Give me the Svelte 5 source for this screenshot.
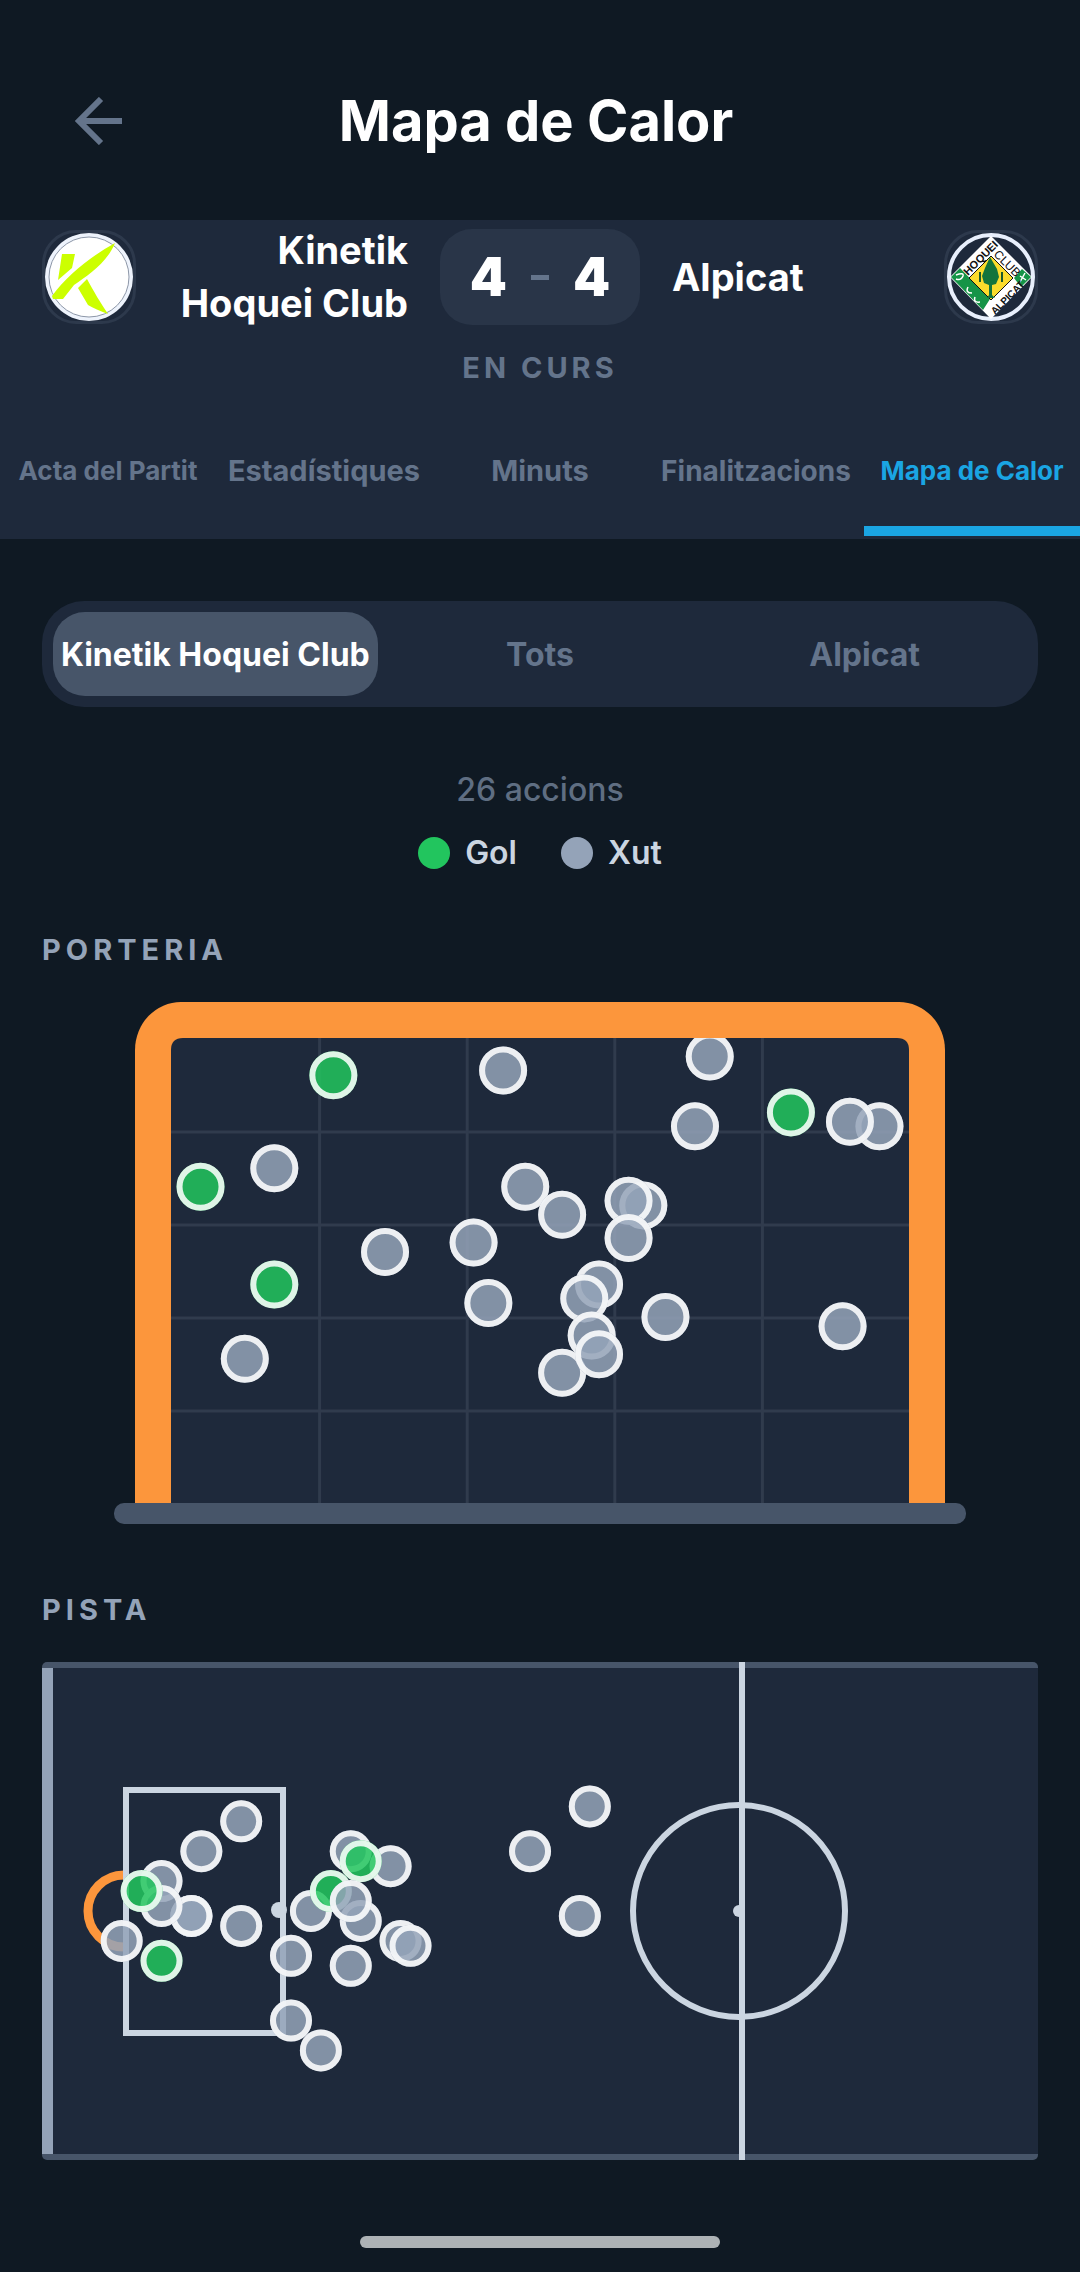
<script>
	const tabs = [
		{ label: 'Acta del Partit', size: 'small' },
		{ label: 'Estadístiques', size: 'large' },
		{ label: 'Minuts', size: 'large' },
		{ label: 'Finalitzacions', size: 'medium' },
		{ label: 'Mapa de Calor', size: 'small' },
	];
	const teams = ['Kinetik Hoquei Club', 'Tots', 'Alpicat'];

	let tab = 'Mapa de Calor';
	let team = 'Kinetik Hoquei Club';

	// x and y are percentages of the goal mouth
	const goalShots = [
		{ x: 22, y: 8, goal: true },
		{ x: 4, y: 32, goal: true },
		{ x: 14, y: 53, goal: true },
		{ x: 84, y: 16, goal: true },
		{ x: 14, y: 28 },
		{ x: 45, y: 7 },
		{ x: 48, y: 32 },
		{ x: 53, y: 38 },
		{ x: 29, y: 46 },
		{ x: 41, y: 44 },
		{ x: 43, y: 57 },
		{ x: 10, y: 69 },
		{ x: 73, y: 4 },
		{ x: 71, y: 19 },
		{ x: 96, y: 19 },
		{ x: 92, y: 18 },
		{ x: 64, y: 36 },
		{ x: 62, y: 35 },
		{ x: 62, y: 43 },
		{ x: 58, y: 53 },
		{ x: 56, y: 56 },
		{ x: 57, y: 64 },
		{ x: 53, y: 72 },
		{ x: 58, y: 68 },
		{ x: 67, y: 60 },
		{ x: 91, y: 62 },
	];

	// x and y are percentages of the rink
	const rinkShots = [
		{ x: 20, y: 32 },
		{ x: 16, y: 38 },
		{ x: 12, y: 44 },
		{ x: 15, y: 51 },
		{ x: 15, y: 51 },
		{ x: 12, y: 49 },
		{ x: 10, y: 46, goal: true },
		{ x: 20, y: 53 },
		{ x: 8, y: 56 },
		{ x: 12, y: 60, goal: true },
		{ x: 31, y: 38 },
		{ x: 35, y: 41 },
		{ x: 32, y: 40, goal: true },
		{ x: 27, y: 50 },
		{ x: 29, y: 46, goal: true },
		{ x: 32, y: 52 },
		{ x: 31, y: 48 },
		{ x: 36, y: 56 },
		{ x: 37, y: 57 },
		{ x: 25, y: 59 },
		{ x: 31, y: 61 },
		{ x: 25, y: 72 },
		{ x: 28, y: 78 },
		{ x: 55, y: 29 },
		{ x: 49, y: 38 },
		{ x: 54, y: 51 },
	];
</script>

<style>
	:global(html), :global(body) { margin:0; background:#0f1923 }
	.screen { font-family: Inter, 'Open Sans', sans-serif; color:#fff; font-weight:700 }
	button { border:0; background:none; font:inherit; color:inherit; padding:0; cursor:pointer }
	svg { display:block }

	header { display:grid; grid-template-columns: 120px 1fr 128px; align-items:center; padding:71px 38px 49px }
	header h1 { margin:0; text-align:center; font-size:56px; line-height:100px; font-weight:700 }
	.back { display:flex; justify-content:center }

	.match { background:#1e293b }
	.teams { display:grid; grid-template-columns: 1fr 200px 1fr; align-items:center; gap:32px; padding:4px 42px 0 }
	.side { display:flex; align-items:center; justify-content:space-between; gap:32px }
	.side p { margin:0; font-size:38px; line-height:53px }
	.home p { text-align:right }
	.crest { flex:none; width:88px; height:88px; border:3px solid #2d394c; border-radius:34px }
	.crest svg { width:100%; height:100% }
	.score { display:flex; align-items:center; justify-content:center; gap:24px; height:96px; border-radius:32px; background:#293548; font-size:53px; font-weight:900 }
	.score i { width:18px; height:5px; background:#64748b }
	.status { margin:0; padding:18px 0 0; text-align:center; font-size:29px; line-height:40px; letter-spacing:4px; color:#64748b }

	.tabs { display:grid; grid-template-columns: repeat(5, 1fr); padding:33px 0 3px }
	.tabs button { height:115px; padding-bottom:6px; border-bottom:10px solid transparent; color:#64748b; white-space:nowrap }
	.tabs .small { font-size:26px }
	.tabs .medium { font-size:28px }
	.tabs .large { font-size:29px }
	.tabs .active { color:#1aa5e3; border-bottom-color:#1aa5e3 }

	main { padding:62px 42px 0 }
	.filter { display:grid; grid-template-columns: repeat(3, 1fr); padding:11px; border-radius:42px; background:#1e293b }
	.filter button { height:84px; border-radius:32px; font-size:32px; color:#64748b; white-space:nowrap }
	.filter .active { background:#475569; color:#fff }
	.count { margin:62px 0 0; text-align:center; font-size:32px; line-height:42px; font-weight:500; color:#5f6e82 }
	.legend { display:flex; justify-content:center; gap:44px; margin-top:21px; font-size:32px; line-height:42px; font-weight:600; color:#cbd5e1 }
	.legend span { display:flex; align-items:center; gap:15px }
	.legend i { width:32px; height:32px; border-radius:50%; background:#94a3b8 }
	.legend .gol { background:#22c55e }
	h2 { margin:0; font-size:29px; line-height:40px; letter-spacing:5px; color:#94a3b8 }
	.legend + h2 { margin-top:56px }
	.goal { width:100%; box-sizing:border-box; padding:32px 72px 66px }
	.rink { width:100%; padding-top:32px }

	footer { display:flex; justify-content:center; padding:76px 0 24px }
	footer span { width:360px; height:12px; border-radius:6px; background:#adb2b5 }
</style>

{#snippet shot(cx, cy, r, goal)}
	<circle {cx} {cy} {r} fill={goal ? '#22c55e' : '#94a3b8'} fill-opacity="0.85" />
	<circle {cx} {cy} r={r - 3} fill="none" stroke="#fff" stroke-opacity="0.86" stroke-width="6" />
{/snippet}

<div class="screen">
	<header>
		<button class="back" aria-label="Enrere">
			<svg width="48" height="48" viewBox="0 0 48 48" fill="none" stroke="#64748b" stroke-width="6">
				<path d="M48 24H5M27 2 5 24l22 22" />
			</svg>
		</button>
		<h1>Mapa de Calor</h1>
	</header>

	<section class="match">
		<div class="teams">
			<div class="side home">
				<div class="crest">
					<svg viewBox="0 0 88 88">
						<circle cx="44" cy="44" r="44" fill="#eef3fc" />
						<circle cx="44" cy="44" r="40" fill="#fff" stroke="#8d97a8" stroke-width="1" />
						<path d="M17 21h13l-3 14-14 12zM70 10C62 30 42 43 29 52L18 66H8l-1-3C22 42 48 22 70 10zM33 55l9-9c7 13 13 23 21 35-8-3-15-6-20-9z" fill="#ccff00" />
					</svg>
				</div>
				<p>Kinetik<br>Hoquei Club</p>
			</div>
			<div class="score"><span>4</span><i></i><span>4</span></div>
			<div class="side away">
				<p>Alpicat</p>
				<div class="crest">
					<svg viewBox="0 0 88 88">
						<circle cx="44" cy="44" r="42" fill="#1e293b" stroke="#e8effc" stroke-width="4" />
						<path d="M44 3 85 44 44 86 3 44z" fill="#fff" />
						<path d="M4 44 13 35 43 66 36 77zM84 44 75 36 67 45 74 54z" fill="#159447" />
						<path d="M44 23 66 45 44 67 22 45z" fill="#fbdc2c" stroke="#111" stroke-width="1" />
						<path d="m43 24 7 12 2 8-3 7-4 1v10l3 3h-8l2-3V52l-5-2-2-7 3-8z" fill="#14743c" />
						<path d="M33 39v10M55 39v10" stroke="#1b5b2c" stroke-width="2" />
						<path d="M9 42q8-3 7 1-2 5-7 3M21 54q-3 6 4 6M28 64q-2 6 5 5M73 43l6 4M78 40l-5 9" fill="none" stroke="#fff" stroke-width="1.5" />
						<g font-family="Liberation Sans" font-weight="700" fill="#111">
							<text transform="translate(21 43) rotate(-45)" font-size="11">HOQUEI</text>
							<text transform="translate(46 22) rotate(45)" font-size="12" font-weight="400">CLUB</text>
							<text transform="translate(48 82) rotate(-45)" font-size="10">ALPICAT</text>
						</g>
					</svg>
				</div>
			</div>
		</div>
		<p class="status">EN CURS</p>
		<nav class="tabs">
			{#each tabs as t}
				<button class={t.size} class:active={tab == t.label} on:click={() => tab = t.label}>{t.label}</button>
			{/each}
		</nav>
	</section>

	<main>
		<div class="filter">
			{#each teams as t}
				<button class:active={team == t} on:click={() => team = t}>{t}</button>
			{/each}
		</div>
		<p class="count">26 accions</p>
		<div class="legend">
			<span><i class="gol"></i>Gol</span>
			<span><i></i>Xut</span>
		</div>

		<h2>PORTERIA</h2>
		<svg class="goal" viewBox="0 0 852 522">
			<defs>
				<clipPath id="mouth"><path d="M57 501V48q0-12 12-12h714q12 0 12 12v453z" /></clipPath>
			</defs>
			<path d="M21 501V48a46 48 0 0 1 46-48h718a46 48 0 0 1 46 48v453z" fill="#fc963c" />
			<g clip-path="url(#mouth)">
				<path d="M57 36h738v465H57z" fill="#1e293b" />
				{#each [1, 2, 3, 4] as n}
					<path d="M{57 + n * 147.6 + 1} 36v465M57 {36 + n * 93 + 1}h738" stroke="#303b4d" stroke-width="3" />
				{/each}
				{#each goalShots as s}
					{@render shot(57 + s.x * 7.38, 36 + s.y * 4.65, 24, s.goal)}
				{/each}
			</g>
			<rect y="501" width="852" height="21" rx="10" fill="#475569" />
		</svg>

		<h2>PISTA</h2>
		<svg class="rink" viewBox="0 0 996 498">
			<rect width="996" height="498" rx="5" fill="#475569" />
			<path d="M0 6h996v486H0z" fill="#1e293b" />
			<path d="M0 6h11v486H0z" fill="#94a3b8" />
			<path d="M82 213a36 36 0 0 0 0 72" fill="none" stroke="#fc963c" stroke-width="9" />
			<g fill="none" stroke="#cbd5e1" stroke-width="6">
				<path d="M84 128h157v243H84zM700 0v498" />
				<circle cx="697" cy="249" r="106" />
			</g>
			<circle cx="237" cy="248" r="8" fill="#cbd5e1" />
			<circle cx="697" cy="249" r="6" fill="#cbd5e1" />
			{#each rinkShots as s}
				{@render shot(s.x * 9.96, s.y * 4.98, 21, s.goal)}
			{/each}
		</svg>
	</main>

	<footer><span></span></footer>
</div>
